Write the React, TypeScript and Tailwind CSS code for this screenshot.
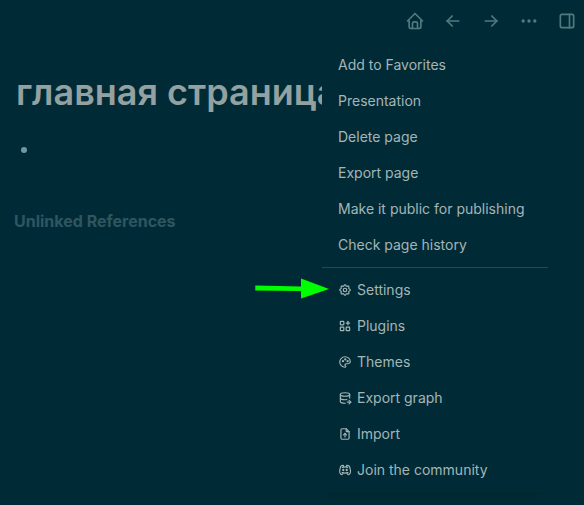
import type { ReactNode } from "react";
import {
  TbApps,
  TbArrowLeft,
  TbArrowRight,
  TbDatabaseExport,
  TbDots,
  TbFileUpload,
  TbHome,
  TbLayoutSidebarRight,
  TbPalette,
  TbSettings,
} from "react-icons/tb";

function DiscordIcon() {
  return (
    <svg
      width="14"
      height="14"
      viewBox="0 0 24 24"
      fill="none"
      stroke="currentColor"
      strokeWidth="2"
      strokeLinecap="round"
      strokeLinejoin="round"
      aria-hidden="true"
    >
      <circle cx="9" cy="12" r="1" />
      <circle cx="15" cy="12" r="1" />
      <path d="M7.5 7.5c3.5 -1 5.5 -1 9 0" />
      <path d="M7 16.5c3.5 1 6.5 1 10 0" />
      <path d="M15.5 17c0 1 1.5 3 2 3c1.5 0 2.833 -1.667 3.5 -3c.667 -1.667 .5 -5.833 -1.5 -11.5c-1.457 -1.015 -3 -1.34 -4.5 -1.5l-1 2.5" />
      <path d="M8.5 17c0 1 -1.356 3 -1.832 3c-1.429 0 -2.698 -1.667 -3.333 -3c-.635 -1.667 -.476 -5.833 1.428 -11.5c1.388 -1.015 2.782 -1.34 4.237 -1.5l1 2.5" />
    </svg>
  );
}

const pageItems = [
  "Add to Favorites",
  "Presentation",
  "Delete page",
  "Export page",
  "Make it public for publishing",
  "Check page history",
];

const appItems: { label: string; icon: ReactNode }[] = [
  { label: "Settings", icon: <TbSettings size={14} /> },
  { label: "Plugins", icon: <TbApps size={14} /> },
  { label: "Themes", icon: <TbPalette size={14} /> },
  { label: "Export graph", icon: <TbDatabaseExport size={14} /> },
  { label: "Import", icon: <TbFileUpload size={14} /> },
  { label: "Join the community", icon: <DiscordIcon /> },
];

const toolbar: { label: string; icon: ReactNode }[] = [
  { label: "Home", icon: <TbHome size={20} /> },
  { label: "Go back", icon: <TbArrowLeft size={20} /> },
  { label: "Go forward", icon: <TbArrowRight size={20} /> },
  { label: "More", icon: <TbDots size={20} /> },
  { label: "Toggle right sidebar", icon: <TbLayoutSidebarRight size={20} /> },
];

function MenuItem({ label, icon }: { label: string; icon?: ReactNode }) {
  return (
    <button
      type="button"
      role="menuitem"
      className="flex h-9 w-full items-center gap-[5px] px-4 text-left text-sm hover:bg-[#073642]"
    >
      {icon}
      <span>{label}</span>
    </button>
  );
}

export default function App() {
  return (
    <div className="relative min-h-screen overflow-hidden bg-[#002b36] font-['Inter','Noto_Sans',sans-serif] text-[#a4b5b6]">
      <header className="flex justify-end gap-[18px] pt-[11px] pr-[7px] text-[#4f7b80]">
        {toolbar.map((t) => (
          <button key={t.label} type="button" aria-label={t.label}>
            {t.icon}
          </button>
        ))}
      </header>

      <main className="px-4 pt-[41px]">
        <h1 className="text-4xl font-semibold whitespace-nowrap text-[#93a1a1]">главная страница</h1>
        <ul className="pt-[35px] pl-[5px]">
          <li className="size-[6px] rounded-full bg-[#6b9a9e]" />
        </ul>
        <h2 className="-ml-0.5 pt-14 text-base font-bold text-[#2f5660]">Unlinked References</h2>
      </main>

      <div
        role="menu"
        className="absolute top-[43px] right-9 w-[226px] rounded-md bg-[#002b36] py-1 shadow-lg shadow-black/5"
      >
        {pageItems.map((label) => (
          <MenuItem key={label} label={label} />
        ))}
        <hr className="my-1 border-[#0e5263]" />
        {appItems.map((item) => (
          <MenuItem key={item.label} label={item.label} icon={item.icon} />
        ))}
      </div>

      <svg
        className="absolute top-[278px] right-[254px]"
        width="76"
        height="22"
        viewBox="0 0 76 22"
        aria-hidden="true"
      >
        <path d="M1.3 7.4L47 8.4V0.5L75 11L47 20.5V13L1.3 12.4Z" fill="#00ff00" />
      </svg>
    </div>
  );
}
